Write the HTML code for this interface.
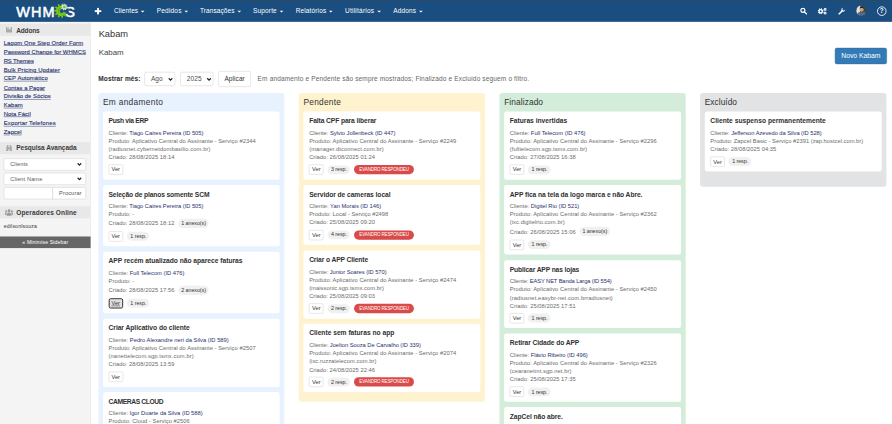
<!DOCTYPE html>
<html lang="pt-BR"><head><meta charset="utf-8"><title>WHMCS - Kabam</title>
<style>
html,body{margin:0;padding:0;background:#fff;overflow:hidden;}
body{width:892px;height:424px;}
#page{position:absolute;left:0;top:0;width:1920px;height:913px;transform:scale(0.464583);transform-origin:0 0;font-family:"Liberation Sans",sans-serif;font-size:13px;color:#333;overflow:hidden;background:#fff;}
#nav{position:absolute;left:0;top:0;width:1920px;height:46.6px;background:#1a4d80;z-index:5;}
#nav .strip{position:absolute;left:0;top:0;width:1920px;height:2px;background:#2d4a62;}
#logo{position:absolute;left:0;top:0;}
.plus{position:absolute;left:204.1px;top:17.1px;width:13.6px;height:13.6px;}
.plus:before{content:"";position:absolute;left:0;top:4.9px;width:13.6px;height:3.8px;background:#fff;}
.plus:after{content:"";position:absolute;left:4.9px;top:0;width:3.8px;height:13.6px;background:#fff;}
.ni{position:absolute;top:3.2px;height:43px;line-height:43px;color:#fff;font-size:14px;white-space:nowrap;}
.caret{display:inline-block;width:0;height:0;border-left:4px solid transparent;border-right:4px solid transparent;border-top:4.5px solid #fff;margin-left:6px;vertical-align:middle;position:relative;top:-0.5px;}
.ricon{position:absolute;top:0;}
#side{position:absolute;left:0;top:45.8px;width:194px;height:868px;background:#f4f4f4;border-right:1px solid #e2e2e2;}
.sh{position:absolute;left:0;width:194px;height:26.2px;background:#e8e8e8;font-weight:bold;font-size:14px;line-height:26.2px;color:#3a3a3a;}
.sh>span{position:absolute;left:35px;top:1.2px;white-space:nowrap;}
.sh svg{position:absolute;left:12px;top:6px;}
#links{position:absolute;left:8px;top:37.7px;line-height:19.25px;font-size:12.7px;}
#links a{display:block;color:#1e2f6c;text-decoration:underline;white-space:nowrap;-webkit-text-stroke:0.25px #1e2f6c;}
.sel{position:absolute;left:8px;width:175px;height:24px;border:1px solid #ccc;border-radius:3px;background:#fff;font-size:12px;color:#5a5a5a;line-height:24px;}
.sel>span{position:absolute;left:13px;}
.chev{position:absolute;}
#main h1{position:absolute;left:212.4px;top:57.5px;margin:0;font-size:20px;font-weight:normal;line-height:30px;color:#333;white-space:nowrap;}
#main h2{position:absolute;left:212.4px;top:100px;margin:0;font-size:16.9px;font-weight:normal;line-height:26px;color:#444;white-space:nowrap;}
.btnp{position:absolute;left:1797.2px;top:103.2px;width:111.6px;height:34.4px;background:#337ab7;border:1px solid #2e6da4;border-radius:4px;box-sizing:border-box;color:#fff;font-size:14.6px;line-height:32.4px;text-align:center;}
.flt{position:absolute;top:153px;height:34px;line-height:34px;white-space:nowrap;}
.fsel{position:absolute;top:155px;height:30px;border:1px solid #ccc;border-radius:3px;box-sizing:border-box;background:#fff;color:#4c4c4c;font-size:13px;line-height:28px;}
.col{position:absolute;top:199.8px;width:400.8px;border-radius:6px;padding:10px 10px 9.5px 10px;box-sizing:border-box;}
.c-blue{left:211.6px;background:#e7f2fe;height:800px;}
.c-yellow{left:643.4px;background:#fff2cf;}
.c-green{left:1075.2px;background:#d4edda;height:800px;}
.c-gray{left:1507px;background:#e2e3e5;height:202.2px;}
.coltitle{font-size:18px;line-height:22px;color:#333;margin:-2px 0 10.4px 0px;white-space:nowrap;}
.card{background:#fff;border-radius:5px;padding:10px 12px 10.5px 12px;margin-bottom:11.8px;}
.ct{font-weight:bold;font-size:14.4px;line-height:20px;color:#303030;margin-bottom:7.5px;white-space:nowrap;}
.meta{font-size:12.4px;line-height:17.6px;color:#6a6a6a;white-space:nowrap;}
.meta a{color:#27316d;}
.lc{letter-spacing:0.13px;}.lp{letter-spacing:0.27px;}.ld{letter-spacing:0.4px;}.lr{letter-spacing:0.27px;}.lr.hasax{line-height:20.5px;}
.act{margin-top:6.1px;height:22px;position:relative;white-space:nowrap;font-size:0;}
.ver{display:inline-block;box-sizing:border-box;height:22px;width:31px;border:1px solid #ccc;border-radius:3px;font-size:12.3px;line-height:20px;text-align:center;color:#333;background:#fff;vertical-align:middle;}
.ver.foc{border:2px solid #222;box-shadow:inset 0 0 0 1px #fff;border-radius:4px;text-decoration:underline;background:#e0e0e0;line-height:18px;}
.pill{display:inline-block;background:#f0f0f0;color:#333;border-radius:10px;font-size:11.5px;line-height:19px;height:19px;padding:0 6.5px;vertical-align:middle;}
.pill.rs{margin-left:8.3px;padding-left:7.7px;}
.pill.ax{margin-left:8.5px;font-size:11.5px;position:relative;top:-1px;padding:0 6px;height:20px;line-height:20px;}
.red{display:inline-block;background:#da4a49;color:#fff;border-radius:10px;font-size:9.6px;line-height:20px;height:20px;padding:0 11.5px;margin-left:9px;vertical-align:middle;letter-spacing:0px;}
</style></head><body>
<div id="page">
 <div id="nav">
  <div class="strip"></div>
  <svg id="logo" width="180" height="46" viewBox="0 0 180 46"><text x="34.8" y="36.3" font-family="Liberation Sans, sans-serif" font-size="31.2" fill="#fff" stroke="#fff" stroke-width="1.1" textLength="82.5" lengthAdjust="spacing">WHM</text><text x="161.5" y="36.3" text-anchor="end" font-family="Liberation Sans, sans-serif" font-size="31.2" fill="#fff" stroke="#fff" stroke-width="1.1">S</text><text x="132.3" y="30.4" text-anchor="middle" font-family="Liberation Sans, sans-serif" font-size="20" font-weight="bold" fill="#73c51b">C</text><path fill="#73c51b" fill-rule="evenodd" d="M143.34 24.34 L147.14 26.04 L146.27 28.99 L142.16 28.38 L140.93 30.29 L143.20 33.77 L140.87 35.79 L137.75 33.05 L135.68 33.99 L135.70 38.15 L132.66 38.59 L131.51 34.59 L129.26 34.27 L127.03 37.78 L124.24 36.50 L125.43 32.52 L123.71 31.03 L119.94 32.78 L118.28 30.19 L121.44 27.49 L120.80 25.30 L116.68 24.74 L116.68 21.66 L120.80 21.10 L121.44 18.91 L118.28 16.21 L119.94 13.62 L123.71 15.37 L125.43 13.88 L124.24 9.90 L127.03 8.62 L129.26 12.13 L131.51 11.81 L132.66 7.81 L135.70 8.25 L135.68 12.41 L137.75 13.35 L140.87 10.61 L143.20 12.63 L140.93 16.11 L142.16 18.02 L146.27 17.41 L147.14 20.36 L143.34 22.06Z M126.00 23.20 a6.00 6.00 0 1 0 12.00 0 a6.00 6.00 0 1 0 -12.00 0Z"/><path d="M131.500 23.2 L148 17.500 L148 29.500 Z" fill="#1a4d80"/><path fill="#d4d9de" fill-rule="evenodd" d="M143.60 16.03 L145.56 17.22 L144.81 18.86 L142.63 18.16 L141.74 19.07 L142.48 21.24 L140.85 22.02 L139.63 20.08 L138.37 20.20 L137.54 22.34 L135.79 21.89 L136.10 19.61 L135.06 18.90 L133.05 20.00 L132.00 18.54 L133.70 16.99 L133.36 15.77 L131.11 15.33 L131.25 13.53 L133.54 13.44 L134.06 12.29 L132.63 10.50 L133.89 9.21 L135.70 10.62 L136.85 10.07 L136.89 7.78 L138.69 7.60 L139.18 9.84 L140.40 10.16 L141.91 8.43 L143.40 9.45 L142.33 11.48 L143.07 12.52 L145.33 12.16 L145.82 13.90 L143.69 14.77Z M136.30 15.00 a2.20 2.20 0 1 0 4.40 0 a2.20 2.20 0 1 0 -4.40 0Z"/><circle cx="138.500" cy="15" r="2.2" fill="#73c51b"/></svg>
  <span class="plus"></span>
  <span class="ni" style="left:245.4px"><span class="nt" style="letter-spacing:0.188px">Clientes</span><i class="caret"></i></span><span class="ni" style="left:337.5px"><span class="nt" style="letter-spacing:0.401px">Pedidos</span><i class="caret"></i></span><span class="ni" style="left:430.3px"><span class="nt" style="letter-spacing:0.218px">Transações</span><i class="caret"></i></span><span class="ni" style="left:544.6px"><span class="nt" style="letter-spacing:0.331px">Suporte</span><i class="caret"></i></span><span class="ni" style="left:636.5px"><span class="nt" style="letter-spacing:0.281px">Relatórios</span><i class="caret"></i></span><span class="ni" style="left:742.6px"><span class="nt" style="letter-spacing:0.507px">Utilitários</span><i class="caret"></i></span><span class="ni" style="left:846.4px"><span class="nt" style="letter-spacing:0.330px">Addons</span><i class="caret"></i></span>
  <svg class="ricon" style="left:1721.500px;top:16px" width="16" height="16" viewBox="0 0 16 16"><circle cx="6.2" cy="6.2" r="4.3" fill="none" stroke="#fff" stroke-width="2.500"/><path d="M9.600 9.600 L14.200 14.200" stroke="#fff" stroke-width="2.800" stroke-linecap="round"/></svg>
  <svg class="ricon" style="left:1760px;top:16px" width="20" height="16" viewBox="0 0 20 16"><path fill="#fff" fill-rule="evenodd" d="M11.18 8.68 L12.84 9.63 L12.21 11.32 L10.33 10.95 L9.44 11.92 L9.95 13.77 L8.30 14.52 L7.24 12.93 L5.92 12.98 L4.97 14.64 L3.28 14.01 L3.65 12.13 L2.68 11.24 L0.83 11.75 L0.08 10.10 L1.67 9.04 L1.62 7.72 L-0.04 6.77 L0.59 5.08 L2.47 5.45 L3.36 4.48 L2.85 2.63 L4.50 1.88 L5.56 3.47 L6.88 3.42 L7.83 1.76 L9.52 2.39 L9.15 4.27 L10.12 5.16 L11.97 4.65 L12.72 6.30 L11.13 7.36Z M4.30 8.20 a2.10 2.10 0 1 0 4.20 0 a2.10 2.10 0 1 0 -4.20 0Z"/><path fill="#fff" fill-rule="evenodd" d="M18.48 4.97 L19.36 5.76 L18.71 6.72 L17.65 6.21 L16.95 6.62 L16.87 7.80 L15.72 7.89 L15.46 6.74 L14.70 6.45 L13.73 7.13 L12.94 6.28 L13.67 5.36 L13.43 4.59 L12.30 4.25 L12.47 3.11 L13.64 3.11 L14.10 2.43 L13.65 1.34 L14.65 0.75 L15.39 1.67 L16.20 1.61 L16.77 0.58 L17.85 1.00 L17.59 2.14 L18.15 2.74 L19.31 2.55 L19.66 3.65 L18.60 4.16Z M15.00 4.20 a1.00 1.00 0 1 0 2.00 0 a1.00 1.00 0 1 0 -2.00 0Z"/><path fill="#fff" fill-rule="evenodd" d="M18.28 13.45 L18.98 14.39 L18.16 15.21 L17.22 14.50 L16.45 14.76 L16.14 15.90 L14.99 15.76 L14.96 14.58 L14.28 14.15 L13.20 14.62 L12.59 13.63 L13.49 12.88 L13.40 12.07 L12.36 11.52 L12.75 10.43 L13.91 10.66 L14.49 10.09 L14.27 8.93 L15.36 8.56 L15.90 9.60 L16.71 9.70 L17.48 8.81 L18.45 9.43 L17.97 10.50 L18.40 11.19 L19.57 11.24 L19.70 12.39 L18.56 12.68Z M15.00 12.20 a1.00 1.00 0 1 0 2.00 0 a1.00 1.00 0 1 0 -2.00 0Z"/></svg>
  <svg class="ricon" style="left:1804px;top:16px" width="16" height="16" viewBox="0 0 16 16"><path d="M2 14 L9.500 6.500" stroke="#fff" stroke-width="3.200" stroke-linecap="round"/><path fill="#fff" d="M11.300 0.800 a4.200 4.200 0 1 0 3.900 3.900 l-2.700 2.700 l-2.800 -1.100 l-1.100 -2.800 z"/></svg>
  <svg class="ricon" style="left:1842.800px;top:11.900px;border-radius:50%;overflow:hidden" width="22.200" height="22.200" viewBox="0 0 22 22"><g><rect width="22" height="22" fill="#4b4b40"/><path d="M0 0 H9 L7 22 H0 Z" fill="#e4e2d8"/><path d="M14 0 H22 V12 H16 Z" fill="#3d4038"/><ellipse cx="11.500" cy="8.500" rx="4.300" ry="5.200" fill="#c7a591"/><path d="M7 6.500 Q7.500 1.800 12 2 Q16.500 2.200 16 7 Q14 4.500 11 5 Q8.500 5.200 7 6.500Z" fill="#2a2420"/><path d="M8 10.500 Q11.500 16.500 15 10.500 Q15 14.500 11.500 15 Q8 14.500 8 10.500Z" fill="#5b4a42"/><path d="M0.500 22 Q2 13.500 8.500 13.500 L11.500 16 L14.500 13.500 Q21 14 21.500 22Z" fill="#586a8e"/></g></svg>
  <svg class="ricon" style="left:1887px;top:12.800px" width="22" height="22" viewBox="0 0 22 22"><circle cx="11" cy="11" r="9.300" fill="none" stroke="#fff" stroke-width="1.900"/><text x="11" y="15.800" text-anchor="middle" font-family="Liberation Sans, sans-serif" font-weight="bold" font-size="13.500" fill="#fff">?</text></svg>
 </div>
 <div id="side">
  <div class="sh" style="top:5.4px"><svg width="15" height="14" viewBox="0 0 15 14"><path fill="#aaa" d="M1 1h13v12h-13z M4 1v5h7v-5z" fill-rule="evenodd"/><rect x="5" y="2" width="2" height="3" fill="#aaa"/></svg><span style="top:0.4px"><span style="letter-spacing:-0.356px">Addons</span></span></div>
  <div id="links"><a><span style="letter-spacing:0.241px">Lagom One Step Order Form</span></a><a><span style="letter-spacing:0.084px">Password Change for WHMCS</span></a><a><span style="letter-spacing:-0.232px">RS Themes</span></a><a><span style="letter-spacing:0.283px">Bulk Pricing Updater</span></a><a><span style="letter-spacing:0.189px">CEP Automático</span></a><a><span style="letter-spacing:0.038px">Contas a Pagar</span></a><a><span style="letter-spacing:0.032px">Divisão de Sócios</span></a><a><span style="letter-spacing:0.202px">Kabam</span></a><a><span style="letter-spacing:0.105px">Nota Fácil</span></a><a><span style="letter-spacing:0.364px">Exportar Telefones</span></a><a><span style="letter-spacing:0.039px">Zapcel</span></a></div>
  <div class="sh" style="top:259.8px"><svg width="15" height="14" viewBox="0 0 15 14"><path fill="#aaa" d="M2 3h4v10h-5z M9 3h4l1 10h-5z M6 5h3v4h-3z M3 0h3v3h-3z M9 0h3v3h-3z"/></svg><span style="top:-0.6px"><span style="letter-spacing:-0.029px">Pesquisa Avançada</span></span></div>
  <div class="sel" style="top:295px"><span><span style="letter-spacing:0.217px">Clients</span></span><svg class="chev" style="left:157px;top:8px" width="10" height="8" viewBox="0 0 10 8"><path d="M1 1.5 L5 5.5 L9 1.5" fill="none" stroke="#222" stroke-width="2.6"/></svg></div>
  <div class="sel" style="top:326px"><span><span style="letter-spacing:0.291px">Client Name</span></span><svg class="chev" style="left:157px;top:8px" width="10" height="8" viewBox="0 0 10 8"><path d="M1 1.5 L5 5.5 L9 1.5" fill="none" stroke="#222" stroke-width="2.6"/></svg></div>
  <div class="sel" style="top:357px;width:104px;border-radius:3px 0 0 3px"></div>
  <div class="sel" style="top:357px;left:113px;width:70px;border-radius:0 3px 3px 0;text-align:center;color:#555;font-size:12px"><span style="letter-spacing:0.351px">Procurar</span></div>
  <div class="sh" style="top:398.2px"><svg width="19" height="15" viewBox="0 0 19 15" style="left:10px;top:6px"><circle cx="9.500" cy="3.600" r="3" fill="#999"/><circle cx="3.300" cy="5" r="2.200" fill="#999"/><circle cx="15.700" cy="5" r="2.200" fill="#999"/><path fill="#999" d="M4 14.500 q0-7 5.500-7 t5.500 7z M0 12.500 q0-5 3.300-5 l1.700 .6 q-1.800 1.700 -1.800 4.400z M19 12.500 q0-5 -3.300-5 l-1.700 .6 q1.800 1.700 1.800 4.400z"/></svg><span style="top:0.2px"><span style="letter-spacing:0.253px">Operadores Online</span></span></div>
  <div style="position:absolute;left:8px;top:433px;font-size:11px;line-height:16px;color:#333;white-space:nowrap"><span style="letter-spacing:0.384px">edilsonlsouza</span></div>
  <div style="position:absolute;left:0;top:463px;width:195px;height:25px;background:#666;color:#fff;font-size:11px;line-height:25px;text-align:center;white-space:nowrap"><span style="letter-spacing:0.288px">« Minimise Sidebar</span></div>
 </div>
 <div id="main">
  <h1>Kabam</h1>
  <h2>Kabam</h2>
  <div class="btnp">Novo Kabam</div>
  <div class="flt" style="left:211.5px;font-weight:bold;font-size:14px;color:#2a2a2a"><span style="letter-spacing:0.272px">Mostrar mês:</span></div>
  <div class="fsel" style="left:311px;width:65.5px"><span style="position:absolute;left:13px;font-size:14px"><span style="letter-spacing:0.019px">Ago</span></span><svg class="chev" style="left:49.500px;top:10.500px" width="10" height="8" viewBox="0 0 10 8"><path d="M1 1.5 L5 5.5 L9 1.5" fill="none" stroke="#222" stroke-width="2.6"/></svg></div>
  <div class="fsel" style="left:388px;width:71px"><span style="position:absolute;left:13px;font-size:14px"><span style="letter-spacing:0.261px">2025</span></span><svg class="chev" style="left:55.500px;top:10.500px" width="10" height="8" viewBox="0 0 10 8"><path d="M1 1.5 L5 5.5 L9 1.5" fill="none" stroke="#222" stroke-width="2.6"/></svg></div>
  <div class="fsel" style="left:470px;top:153px;width:70px;height:34px;line-height:32px;border-radius:4px;text-align:center;color:#333;font-size:14px"><span style="letter-spacing:0.171px">Aplicar</span></div>
  <div class="flt" style="left:554.5px;font-size:14px;color:#666"><span style="letter-spacing:0.328px">Em andamento e Pendente são sempre mostrados; Finalizado e Excluído seguem o filtro.</span></div>
  <div class="col c-blue"><div class="coltitle"><span style="letter-spacing:0.633px">Em andamento</span></div><div class="card"><div class="ct"><span style="letter-spacing:-0.618px">Push via ERP</span></div><div class="meta"><div class="lc"><span style="letter-spacing:-0.068px">Cliente: <a>Tiago Caires Pereira (ID 505)</a></span></div><div class="lp"><span style="letter-spacing:0.108px">Produto: Aplicativo Central do Assinante - Serviço #2344</span></div><div class="ld"><span style="letter-spacing:0.242px">(radiusnet.cybernetdombasilio.com.br)</span></div><div class="lr"><span style="letter-spacing:0.085px">Criado: 28/08/2025 18:14</span></div></div><div class="act"><span class="ver">Ver</span></div></div><div class="card"><div class="ct"><span style="letter-spacing:-0.265px">Seleção de planos somente SCM</span></div><div class="meta"><div class="lc"><span style="letter-spacing:-0.068px">Cliente: <a>Tiago Caires Pereira (ID 505)</a></span></div><div class="lp"><span style="letter-spacing:0.117px">Produto: -</span></div><div class="lr hasax"><span style="letter-spacing:0.085px">Criado: 28/08/2025 18:12</span><span class="pill ax"><span style="letter-spacing:-0.101px">1 anexo(s)</span></span></div></div><div class="act"><span class="ver">Ver</span><span class="pill rs"><span style="letter-spacing:-0.146px">1 resp.</span></span></div></div><div class="card"><div class="ct"><span style="letter-spacing:-0.047px">APP recém atualizado não aparece faturas</span></div><div class="meta"><div class="lc"><span style="letter-spacing:0.005px">Cliente: <a>Full Telecom (ID 476)</a></span></div><div class="lp"><span style="letter-spacing:0.117px">Produto: -</span></div><div class="lr hasax"><span style="letter-spacing:0.085px">Criado: 28/08/2025 17:56</span><span class="pill ax"><span style="letter-spacing:-0.101px">2 anexo(s)</span></span></div></div><div class="act"><span class="ver foc">Ver</span><span class="pill rs"><span style="letter-spacing:-0.146px">1 resp.</span></span></div></div><div class="card"><div class="ct"><span style="letter-spacing:-0.084px">Criar Aplicativo do cliente</span></div><div class="meta"><div class="lc"><span style="letter-spacing:0.039px">Cliente: <a>Pedro Alexandre neri da Silva (ID 589)</a></span></div><div class="lp"><span style="letter-spacing:0.108px">Produto: Aplicativo Central do Assinante - Serviço #2507</span></div><div class="ld"><span style="letter-spacing:0.217px">(nanettelecom.sgp.tsmx.com.br)</span></div><div class="lr"><span style="letter-spacing:0.085px">Criado: 28/08/2025 13:59</span></div></div><div class="act"><span class="ver">Ver</span></div></div><div class="card"><div class="ct"><span style="letter-spacing:-0.797px">CAMERAS CLOUD</span></div><div class="meta"><div class="lc"><span style="letter-spacing:-0.017px">Cliente: <a>Igor Duarte da Silva (ID 588)</a></span></div><div class="lp"><span style="letter-spacing:0.064px">Produto: Cloud - Serviço #2506</span></div><div class="lr"><span style="letter-spacing:0.124px">Criado: 28/08/2025 11:20</span></div></div><div class="act"><span class="ver">Ver</span></div></div></div>
<div class="col c-yellow"><div class="coltitle"><span style="letter-spacing:0.456px">Pendente</span></div><div class="card"><div class="ct"><span style="letter-spacing:-0.182px">Falta CPF para liberar</span></div><div class="meta"><div class="lc"><span style="letter-spacing:-0.086px">Cliente: <a>Sylvio Jollenbeck (ID 447)</a></span></div><div class="lp"><span style="letter-spacing:0.108px">Produto: Aplicativo Central do Assinante - Serviço #2249</span></div><div class="ld"><span style="letter-spacing:0.228px">(manager.dtconnect.com.br)</span></div><div class="lr"><span style="letter-spacing:0.085px">Criado: 26/08/2025 01:24</span></div></div><div class="act"><span class="ver">Ver</span><span class="pill rs"><span style="letter-spacing:-0.146px">3 resp.</span></span><span class="red"><span style="letter-spacing:-0.220px">EVANDRO RESPONDEU</span></span></div></div><div class="card"><div class="ct"><span style="letter-spacing:-0.130px">Servidor de cameras local</span></div><div class="meta"><div class="lc"><span style="letter-spacing:-0.008px">Cliente: <a>Yan Morais (ID 146)</a></span></div><div class="lp"><span style="letter-spacing:0.004px">Produto: Local - Serviço #2498</span></div><div class="lr"><span style="letter-spacing:0.085px">Criado: 25/08/2025 09:20</span></div></div><div class="act"><span class="ver">Ver</span><span class="pill rs"><span style="letter-spacing:-0.146px">4 resp.</span></span><span class="red"><span style="letter-spacing:-0.220px">EVANDRO RESPONDEU</span></span></div></div><div class="card"><div class="ct"><span style="letter-spacing:-0.225px">Criar o APP Cliente</span></div><div class="meta"><div class="lc"><span style="letter-spacing:-0.116px">Cliente: <a>Junior Soares (ID 570)</a></span></div><div class="lp"><span style="letter-spacing:0.108px">Produto: Aplicativo Central do Assinante - Serviço #2474</span></div><div class="ld"><span style="letter-spacing:0.118px">(maissonic.sgp.tsmx.com.br)</span></div><div class="lr"><span style="letter-spacing:0.085px">Criado: 25/08/2025 09:03</span></div></div><div class="act"><span class="ver">Ver</span><span class="pill rs"><span style="letter-spacing:-0.146px">2 resp.</span></span><span class="red"><span style="letter-spacing:-0.220px">EVANDRO RESPONDEU</span></span></div></div><div class="card"><div class="ct"><span style="letter-spacing:-0.021px">Cliente sem faturas no app</span></div><div class="meta"><div class="lc"><span style="letter-spacing:-0.096px">Cliente: <a>Joelton Souza De Carvalho (ID 339)</a></span></div><div class="lp"><span style="letter-spacing:0.108px">Produto: Aplicativo Central do Assinante - Serviço #2074</span></div><div class="ld"><span style="letter-spacing:0.123px">(ixc.ruzzatelecom.com.br)</span></div><div class="lr"><span style="letter-spacing:0.085px">Criado: 24/08/2025 22:46</span></div></div><div class="act"><span class="ver">Ver</span><span class="pill rs"><span style="letter-spacing:-0.146px">2 resp.</span></span><span class="red"><span style="letter-spacing:-0.220px">EVANDRO RESPONDEU</span></span></div></div></div>
<div class="col c-green"><div class="coltitle"><span style="letter-spacing:0.177px">Finalizado</span></div><div class="card"><div class="ct"><span style="letter-spacing:-0.024px">Faturas invertidas</span></div><div class="meta"><div class="lc"><span style="letter-spacing:0.005px">Cliente: <a>Full Telecom (ID 476)</a></span></div><div class="lp"><span style="letter-spacing:0.108px">Produto: Aplicativo Central do Assinante - Serviço #2296</span></div><div class="ld"><span style="letter-spacing:0.168px">(fulltelecom.sgp.tsmx.com.br)</span></div><div class="lr"><span style="letter-spacing:0.085px">Criado: 27/08/2025 16:38</span></div></div><div class="act"><span class="ver">Ver</span><span class="pill rs"><span style="letter-spacing:-0.146px">1 resp.</span></span></div></div><div class="card"><div class="ct"><span style="letter-spacing:-0.132px">APP fica na tela da logo marca e não Abre.</span></div><div class="meta"><div class="lc"><span style="letter-spacing:-0.019px">Cliente: <a>Digitel Rio (ID 521)</a></span></div><div class="lp"><span style="letter-spacing:0.108px">Produto: Aplicativo Central do Assinante - Serviço #2362</span></div><div class="ld"><span style="letter-spacing:0.172px">(ixc.digitelrio.com.br)</span></div><div class="lr hasax"><span style="letter-spacing:0.085px">Criado: 26/08/2025 15:06</span><span class="pill ax"><span style="letter-spacing:-0.101px">1 anexo(s)</span></span></div></div><div class="act"><span class="ver">Ver</span><span class="pill rs"><span style="letter-spacing:-0.146px">1 resp.</span></span></div></div><div class="card"><div class="ct"><span style="letter-spacing:-0.259px">Publicar APP nas lojas</span></div><div class="meta"><div class="lc"><span style="letter-spacing:-0.250px">Cliente: <a>EASY NET Banda Larga (ID 554)</a></span></div><div class="lp"><span style="letter-spacing:0.108px">Produto: Aplicativo Central do Assinante - Serviço #2450</span></div><div class="ld"><span style="letter-spacing:0.225px">(radiusnet.easybr-net.com.brradiusnet)</span></div><div class="lr"><span style="letter-spacing:0.085px">Criado: 25/08/2025 17:51</span></div></div><div class="act"><span class="ver">Ver</span><span class="pill rs"><span style="letter-spacing:-0.146px">1 resp.</span></span></div></div><div class="card"><div class="ct"><span style="letter-spacing:-0.166px">Retirar Cidade do APP</span></div><div class="meta"><div class="lc"><span style="letter-spacing:-0.049px">Cliente: <a>Flávio Ribeiro (ID 496)</a></span></div><div class="lp"><span style="letter-spacing:0.108px">Produto: Aplicativo Central do Assinante - Serviço #2326</span></div><div class="ld"><span style="letter-spacing:0.178px">(cearanetmt.sgp.net.br)</span></div><div class="lr"><span style="letter-spacing:0.085px">Criado: 25/08/2025 17:35</span></div></div><div class="act"><span class="ver">Ver</span><span class="pill rs"><span style="letter-spacing:-0.146px">1 resp.</span></span></div></div><div class="card"><div class="ct"><span style="letter-spacing:-0.108px">ZapCel não abre.</span></div><div class="meta"><div class="lc">Cliente: <a>Zapcel Telecom (ID 512)</a></div><div class="lp">Produto: Zapcel Basic - Serviço #2301</div><div class="lr"><span style="letter-spacing:0.085px">Criado: 25/08/2025 10:12</span></div></div><div class="act"><span class="ver">Ver</span><span class="pill rs"><span style="letter-spacing:-0.146px">1 resp.</span></span></div></div></div>
<div class="col c-gray"><div class="coltitle"><span style="letter-spacing:0.035px">Excluído</span></div><div class="card"><div class="ct"><span style="letter-spacing:0.041px">Cliente suspenso permanentemente</span></div><div class="meta"><div class="lc"><span style="letter-spacing:-0.077px">Cliente: <a>Jefferson Azevedo da Silva (ID 528)</a></span></div><div class="lp"><span style="letter-spacing:0.031px">Produto: Zapcel Basic - Serviço #2391 (zap.hostcel.com.br)</span></div><div class="lr"><span style="letter-spacing:0.085px">Criado: 28/08/2025 04:35</span></div></div><div class="act"><span class="ver">Ver</span><span class="pill rs"><span style="letter-spacing:-0.146px">1 resp.</span></span></div></div></div>

 </div>
</div>
</body></html>
